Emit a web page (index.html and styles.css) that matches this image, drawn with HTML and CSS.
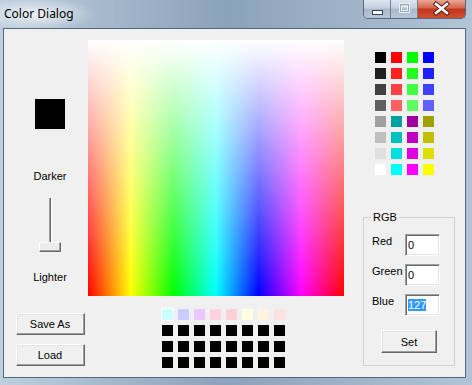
FILE: index.html
```html
<!DOCTYPE html>
<html>
<head>
  <title>Color Dialog</title>
  <link rel="stylesheet" href="styles.css">
</head>
<body>
<div class="window">
  <div class="titlebar">
    <div class="title">Color Dialog</div>
    <div class="caption">
      <div class="cap-btn minimize">
        <svg width="27" height="18" viewBox="0 0 27 18"><rect x="8.5" y="10.5" width="10" height="4" fill="#fff" stroke="#3a4656"/></svg>
      </div>
      <div class="cap-btn maximize">
        <svg width="27" height="18" viewBox="0 0 27 18"><rect x="8.5" y="3.5" width="10" height="9" fill="none" stroke="#e8eef4"/><rect x="9.5" y="4.5" width="8" height="7" fill="none" stroke="#9aa8b8"/><rect x="10.5" y="6.5" width="6" height="4" fill="none" stroke="#e8eef4"/></svg>
      </div>
      <div class="cap-btn close">
        <svg width="47" height="18" viewBox="0 0 47 18"><path d="M18 4 L29 13 M29 4 L18 13" stroke="#5a2318" stroke-width="4.5" stroke-linecap="square"/><path d="M18 4 L29 13 M29 4 L18 13" stroke="#fff" stroke-width="2.5" stroke-linecap="square"/></svg>
      </div>
    </div>
  </div>

  <div class="client">
    <div class="left-col">
      <div class="current-color"></div>
      <div class="caption-text darker">Darker</div>
      <div class="slider">
        <div class="track"></div>
        <div class="thumb"></div>
      </div>
      <div class="caption-text lighter">Lighter</div>
      <button class="win-btn save-as">Save As</button>
      <button class="win-btn load">Load</button>
    </div>

    <div class="center-col">
      <div class="spectrum"></div>
      <div class="custom-colors" id="custom-colors"></div>
    </div>

    <div class="right-col">
      <div class="basic-colors" id="basic-colors"></div>
      <div class="group">
        <div class="group-title">RGB</div>
        <div class="rgb-rows">
          <div class="rgb-row">
            <label for="red">Red</label>
            <div class="textbox" id="red">0</div>
          </div>
          <div class="rgb-row">
            <label for="green">Green</label>
            <div class="textbox" id="green">0</div>
          </div>
          <div class="rgb-row">
            <label for="blue">Blue</label>
            <div class="textbox" id="blue"><span class="selected">127</span></div>
          </div>
        </div>
        <button class="win-btn set">Set</button>
      </div>
    </div>
  </div>
</div>

<script>
  var basicColors = [
    "#000000", "#ff0000", "#00ff00", "#0000ff",
    "#202020", "#ff2020", "#20ff20", "#2020ff",
    "#404040", "#ff4040", "#40ff40", "#4040ff",
    "#606060", "#ff6060", "#60ff60", "#6060ff",
    "#a0a0a0", "#00a0a0", "#a000a0", "#a0a000",
    "#c0c0c0", "#00c0c0", "#c000c0", "#c0c000",
    "#e0e0e0", "#00e0e0", "#e000e0", "#e0e000",
    "#ffffff", "#00ffff", "#ff00ff", "#ffff00"
  ];

  var customColors = [
    "#ccffff", "#c8ccff", "#eac8ff", "#ffd2e2", "#ffd0d6", "#ffffe2", "#fff4e2", "#ffe2e0"
  ];

  function fillSwatches(id, colors) {
    var box = document.getElementById(id);
    for (var i = 0; i < colors.length; i++) {
      var swatch = document.createElement("div");
      swatch.className = "swatch";
      swatch.style.backgroundColor = colors[i];
      box.appendChild(swatch);
    }
  }

  fillSwatches("basic-colors", basicColors);

  // the other three rows of custom colors are still empty (black)
  var allCustom = customColors.slice();
  for (var i = 0; i < 24; i++) {
    allCustom.push("#000000");
  }
  fillSwatches("custom-colors", allCustom);
  document.querySelector("#custom-colors .swatch").className = "swatch active";
</script>
</body>
</html>
```

FILE: styles.css
```css
body {
  margin: 0;
  font-family: "Liberation Sans", Arial, sans-serif;
  font-size: 11px;
  color: #000;
}

.window {
  width: 472px;
  height: 385px;
  display: flex;
  flex-direction: column;
  overflow: hidden;
  background: linear-gradient(to right, #bfcfdf 0%, #a6b9cc 22%, #8aa2ba 48%, #9db2c6 72%, #b2c4d6 100%);
}

.titlebar {
  height: 28px;
  display: flex;
  justify-content: space-between;
  align-items: flex-start;
  padding: 0 6px 0 4px;
  background: radial-gradient(ellipse 60px 16px at 36px 14px, rgba(255, 255, 255, 0.75), rgba(255, 255, 255, 0));
}

.title {
  font-family: "Noto Sans", "Liberation Sans", sans-serif;
  font-size: 12px;
  line-height: 16px;
  padding-top: 6px;
}

.caption {
  display: flex;
  height: 18px;
  border: 1px solid #56687e;
  border-top: none;
  border-radius: 0 0 5px 5px;
  overflow: hidden;
}

.cap-btn {
  height: 18px;
}

.cap-btn svg {
  display: block;
}

.minimize,
.maximize {
  width: 27px;
  background: linear-gradient(#dde6ef, #c3d0dd 45%, #a9b9ca 50%, #b8c7d7 100%);
  border-right: 1px solid #6f8196;
  box-sizing: border-box;
}

.close {
  width: 47px;
  background: linear-gradient(#e9a898, #d6624a 45%, #c2361c 50%, #cf5030 100%);
}

.client {
  height: 350px;
  box-sizing: border-box;
  margin: 0 6px 0 3px;
  border: 1px solid #55677a;
  background-color: #f0f0f0;
  display: flex;
  padding-top: 11px;
}

.left-col {
  width: 84px;
  box-sizing: border-box;
  padding-left: 8px;
  display: flex;
  flex-direction: column;
  align-items: center;
}

.current-color {
  width: 30px;
  height: 30px;
  margin-top: 59px;
  background-color: #000;
}

.caption-text {
  line-height: 13px;
}

.darker {
  margin-top: 41px;
}

.slider {
  width: 22px;
  height: 58px;
  margin-top: 13px;
  display: flex;
  flex-direction: column;
  align-items: center;
}

.track {
  width: 1px;
  height: 45px;
  margin-top: 2px;
  margin-left: 1px;
  border-left: 1px solid #a0a0a0;
  border-right: 1px solid #fff;
  background-color: #696969;
}

.thumb {
  width: 22px;
  height: 10px;
  box-sizing: border-box;
  border: 1px solid;
  border-color: #fff #696969 #696969 #fff;
  box-shadow: inset -1px -1px 0 #a0a0a0;
  background-color: #ececec;
  margin-top: -1px;
}

.lighter {
  margin-top: 17px;
}

.win-btn {
  font-family: "Liberation Sans", Arial, sans-serif;
  font-size: 11px;
  color: #000;
  padding: 0;
  box-sizing: border-box;
  border: 1px solid;
  border-color: #fff #696969 #696969 #fff;
  box-shadow: inset -1px -1px 0 #a0a0a0, inset 1px 1px 0 #e3e3e3;
  background-color: #f0f0f0;
}

.save-as,
.load {
  width: 69px;
  height: 22px;
}

.save-as {
  margin-top: 29px;
}

.load {
  margin-top: 9px;
}

.center-col {
  width: 256px;
}

.spectrum {
  width: 256px;
  height: 256px;
  background:
    linear-gradient(to bottom, #fff, rgba(255, 255, 255, 0)),
    linear-gradient(to right, #f00, #ff0, #0f0, #0ff, #00f, #f0f, #f00);
}

.custom-colors {
  display: grid;
  grid-template-columns: repeat(8, 11px);
  grid-auto-rows: 11px;
  gap: 5px;
  margin: 13px 0 0 74px;
}

.swatch {
  width: 11px;
  height: 11px;
}

.swatch.active {
  outline: 1px solid #fff;
}

.right-col {
  padding-left: 19px;
}

.basic-colors {
  display: grid;
  grid-template-columns: repeat(4, 11px);
  grid-auto-rows: 11px;
  gap: 5px;
  margin: 12px 0 0 12px;
}

.group {
  width: 92px;
  height: 149px;
  box-sizing: border-box;
  margin-top: 42px;
  border: 1px solid #cdd2d7;
}

.group-title {
  width: fit-content;
  line-height: 13px;
  margin: -7px 0 0 7px;
  padding: 0 2px;
  background-color: #f0f0f0;
}

.rgb-rows {
  display: flex;
  flex-direction: column;
  gap: 8px;
  margin-top: 10px;
  padding-left: 8px;
}

.rgb-row {
  display: flex;
  align-items: flex-start;
}

.rgb-row label {
  width: 33px;
  padding-top: 1px;
  line-height: 13px;
}

.textbox {
  width: 35px;
  height: 22px;
  box-sizing: border-box;
  border: 1px solid;
  border-color: #a0a0a0 #fff #fff #a0a0a0;
  box-shadow: inset 1px 1px 0 #696969, inset -1px -1px 0 #e3e3e3;
  background-color: #fff;
  padding: 4px 0 0 2px;
  line-height: 13px;
}

.selected {
  background-color: #3399ff;
  color: #fff;
}

.set {
  display: block;
  width: 56px;
  height: 23px;
  margin: 14px 0 0 17px;
}
```
